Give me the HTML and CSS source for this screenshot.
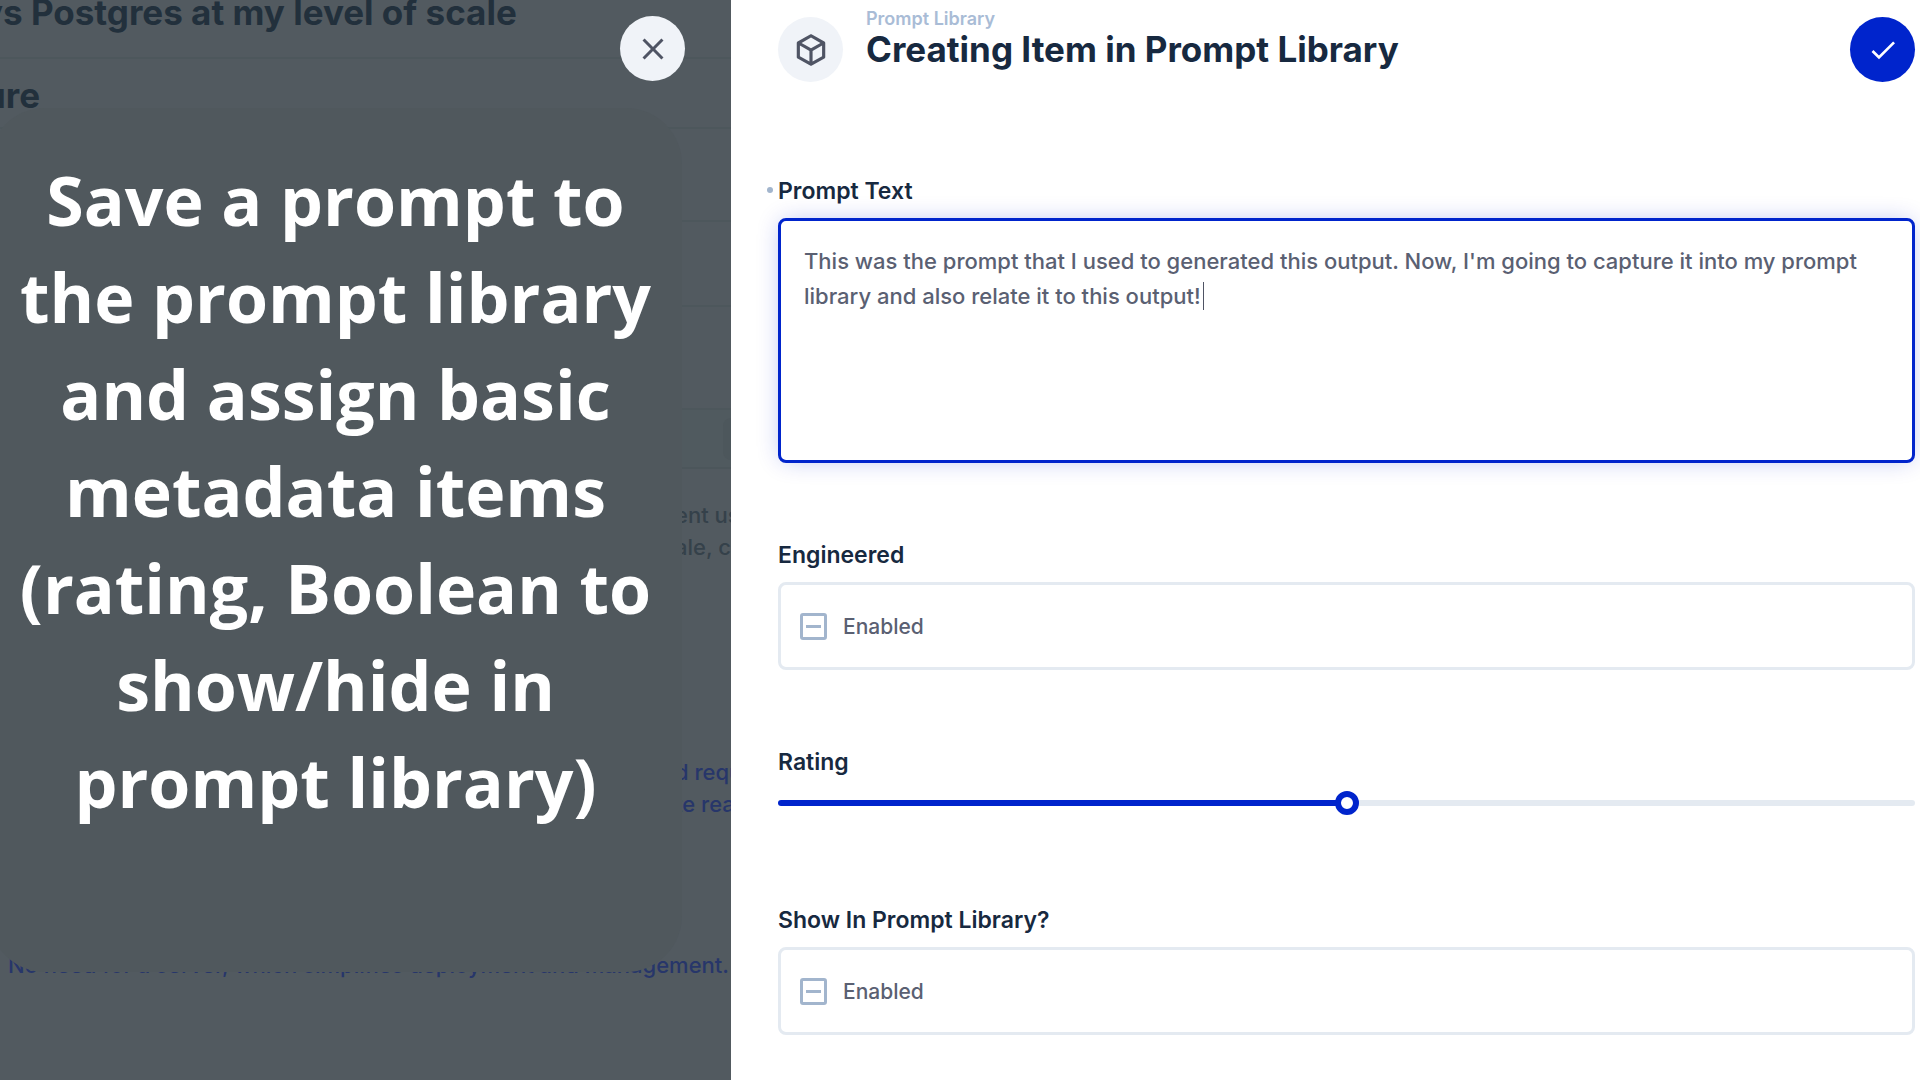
FILE: index.html
```html
<!DOCTYPE html>
<html lang="en">
<head>
<meta charset="utf-8">
<meta name="viewport" content="width=device-width, initial-scale=1">
<title>Creating Item in Prompt Library</title>
<link rel="stylesheet" href="styles.css">
</head>
<body>
<div class="app">
  <section class="backdrop">
    <div class="page">
      <div class="row row-title"><span>vs Postgres at my level of scale</span></div>
      <div class="row row-subtitle"><span>ure</span></div>
      <div class="row row-tall"></div>
      <div class="row row-mid"></div>
      <div class="row row-large"></div>
      <div class="toolbar"><span class="chip"></span></div>
      <p class="excerpt">ent us<br>ale, co</p>
      <p class="excerpt excerpt-link">d requ<br>te rea</p>
      <p class="note">No need for a server, which simplifies deployment and management.</p>
    </div>
    <div class="callout">
      <p class="callout-text">Save a prompt to<br>the prompt library<br>and assign basic<br>metadata items<br>(rating, Boolean to<br>show/hide in<br>prompt library)</p>
    </div>
    <button class="round close" type="button" aria-label="Close">
      <svg viewBox="0 0 24 24" width="36" height="36"><path d="M19 6.41 17.59 5 12 10.59 6.41 5 5 6.41 10.59 12 5 17.59 6.41 19 12 13.41 17.59 19 19 17.59 13.41 12z"/></svg>
    </button>
  </section>

  <main class="drawer">
    <header class="header">
      <span class="round badge">
        <svg viewBox="0 0 24 24" width="38" height="38"><path d="M21 16.5c0 .38-.21.71-.53.88l-7.9 4.44c-.16.12-.36.18-.57.18s-.41-.06-.57-.18l-7.9-4.44A.99.99 0 0 1 3 16.500v-9c0-.38.21-.71.53-.88l7.9-4.44c.16-.12.36-.18.57-.18s.41.06.57.18l7.9 4.440c.32.17.53.5.53.88v9zM12 4.150 6.040 7.500 12 10.850l5.960-3.350L12 4.150zM5 15.910l6 3.380v-6.710L5 9.210v6.700zm14 0v-6.700l-6 3.370v6.710l6-3.380z"/></svg>
      </span>
      <div class="heading">
        <a class="crumb" href="#">Prompt Library</a>
        <h1 class="title">Creating Item in Prompt Library</h1>
      </div>
      <button class="round save" type="button" aria-label="Save">
        <svg viewBox="0 0 24 24" width="32" height="32"><path d="M9 16.170 4.830 12l-1.420 1.410L9 19 21 7l-1.410-1.410z"/></svg>
      </button>
    </header>

    <form class="form">
      <div class="field">
        <label class="label required" for="prompt">Prompt Text</label>
        <div class="editor">
          <textarea class="textarea" id="prompt" spellcheck="false">This was the prompt that I used to generated this output. Now, I'm going to capture it into my prompt library and also relate it to this output!</textarea>
          <span class="caret"></span>
        </div>
      </div>
      <div class="field">
        <span class="label" id="engineered-label">Engineered</span>
        <label class="toggle"><input class="check" type="checkbox" aria-describedby="engineered-label">Enabled</label>
      </div>
      <div class="field field-range">
        <label class="label" for="rating">Rating</label>
        <input class="range" id="rating" type="range" min="0" max="10" value="5">
      </div>
      <div class="field">
        <span class="label" id="show-label">Show In Prompt Library?</span>
        <label class="toggle"><input class="check" type="checkbox" aria-describedby="show-label">Enabled</label>
      </div>
    </form>
  </main>
</div>
</body>
</html>
```
FILE: styles.css
```css
* { box-sizing: border-box; }

body {
  margin: 0;
  background: #fff;
  color: #5a6072;
  font-family: Inter, "Liberation Sans", sans-serif;
}

p, h1 { margin: 0; }

.app {
  display: grid;
  grid-template-columns: 731fr 1189fr;
  min-height: 100vh;
}

/* Dimmed page behind the drawer */
.backdrop {
  position: relative;
  min-width: 0;
  overflow: hidden;
  background: #525a60;
}

.page {
  color: #35414a;
  font-size: 22px;
  font-weight: 500;
  line-height: 32px;
  white-space: nowrap;
}

.row {
  display: flex;
  align-items: center;
  border-bottom: 2px solid #4d575c;
  color: #22303c;
  font-size: 35px;
  font-weight: 700;
}

.row-title { height: 59px; padding-bottom: 34px; }
.row-title span { margin-left: -18px; }
.row-subtitle { height: 70px; padding-top: 3px; }
.row-subtitle span { margin-left: -16px; }
.row-tall { height: 93px; }
.row-mid { height: 85px; }
.row-large { height: 103px; }

.toolbar {
  display: flex;
  justify-content: flex-end;
  align-items: center;
  height: 59px;
  border-bottom: 2px solid #4c565b;
  background: #505a5f;
}

.chip {
  width: 8px;
  height: 42px;
  border-radius: 8px 0 0 8px;
  background: #4d575c;
}

.excerpt {
  width: 56px;
  margin: 30px 0 0 auto;
}

.excerpt-link {
  margin-top: 193px;
  color: #27366a;
}

.note {
  margin: 129px 0 0 8px;
  color: #27366a;
}

.callout {
  position: absolute;
  top: 108px;
  right: 49px;
  left: -11px;
  height: 864px;
  padding: 43px 0 0;
  border-radius: 56px;
  background: #50585d;
}

.callout-text {
  color: #fff;
  font-family: "Open Sans", "Noto Sans", sans-serif;
  font-size: 68px;
  font-weight: 700;
  line-height: 97px;
  text-align: center;
  white-space: nowrap;
}

.round {
  display: flex;
  flex: none;
  align-items: center;
  justify-content: center;
  width: 65px;
  height: 65px;
  padding: 0;
  border: 0;
  border-radius: 50%;
  background: #f0f3f8;
  fill: #4f5464;
}

.close {
  position: absolute;
  top: 16px;
  right: 46px;
}

.save {
  margin-left: auto;
  background: #0024cc;
  fill: #fff;
}

/* Drawer */
.drawer {
  min-width: 0;
  padding: 9px 5px 44px 47px;
}

.header {
  display: flex;
  align-items: flex-end;
  height: 73px;
}

.heading {
  align-self: flex-start;
  margin-left: 23px;
}

.crumb {
  display: block;
  color: #a9bcd6;
  font-size: 18px;
  font-weight: 600;
  line-height: 20px;
  text-decoration: none;
}

.title {
  color: #172940;
  font-size: 35px;
  font-weight: 700;
  line-height: 40px;
}

.form {
  display: flex;
  flex-direction: column;
  gap: 78px;
  margin-top: 95px;
}

.field {
  display: flex;
  flex-direction: column;
  gap: 13px;
}

.field-range { padding-bottom: 11px; }

.label {
  position: relative;
  align-self: flex-start;
  color: #172940;
  font-size: 23px;
  font-weight: 600;
  line-height: 28px;
}

.required::before {
  content: "";
  position: absolute;
  top: 10px;
  left: -11px;
  width: 6px;
  height: 6px;
  border-radius: 50%;
  background: #a2b5cd;
}

.editor {
  position: relative;
  display: flex;
}

.textarea {
  width: 100%;
  height: 245px;
  padding: 23px 23px 20px;
  border: 3px solid #0024cc;
  border-radius: 8px;
  outline: 0;
  background: #fff;
  box-shadow: 0 0 24px -4px rgba(0, 36, 204, 0.3);
  color: #5a6072;
  font-family: inherit;
  font-size: 22px;
  font-weight: 500;
  line-height: 35px;
  resize: none;
}

.caret {
  position: absolute;
  top: 64px;
  left: 425px;
  width: 1px;
  height: 28px;
  background: #4f5464;
}

.toggle {
  display: flex;
  align-items: center;
  gap: 16px;
  height: 88px;
  padding: 0 19px;
  border: 3px solid #e4eaf1;
  border-radius: 8px;
  font-size: 21px;
  font-weight: 500;
}

.check {
  display: grid;
  place-items: center;
  width: 27px;
  height: 27px;
  margin: 0;
  border: 3px solid #a2b5cd;
  border-radius: 3px;
  appearance: none;
}

.check::before {
  content: "";
  width: 15px;
  height: 3px;
  background: #a2b5cd;
}

.range {
  width: 100%;
  height: 28px;
  margin: 0;
  background: transparent;
  appearance: none;
}

.range::-webkit-slider-runnable-track {
  height: 6px;
  border-radius: 3px;
  background: linear-gradient(90deg, #0024cc 50%, #e4eaf1 50%);
}

.range::-webkit-slider-thumb {
  width: 24px;
  height: 24px;
  margin-top: -9px;
  border: 6px solid #0024cc;
  border-radius: 50%;
  background: #fff;
  appearance: none;
}
```
